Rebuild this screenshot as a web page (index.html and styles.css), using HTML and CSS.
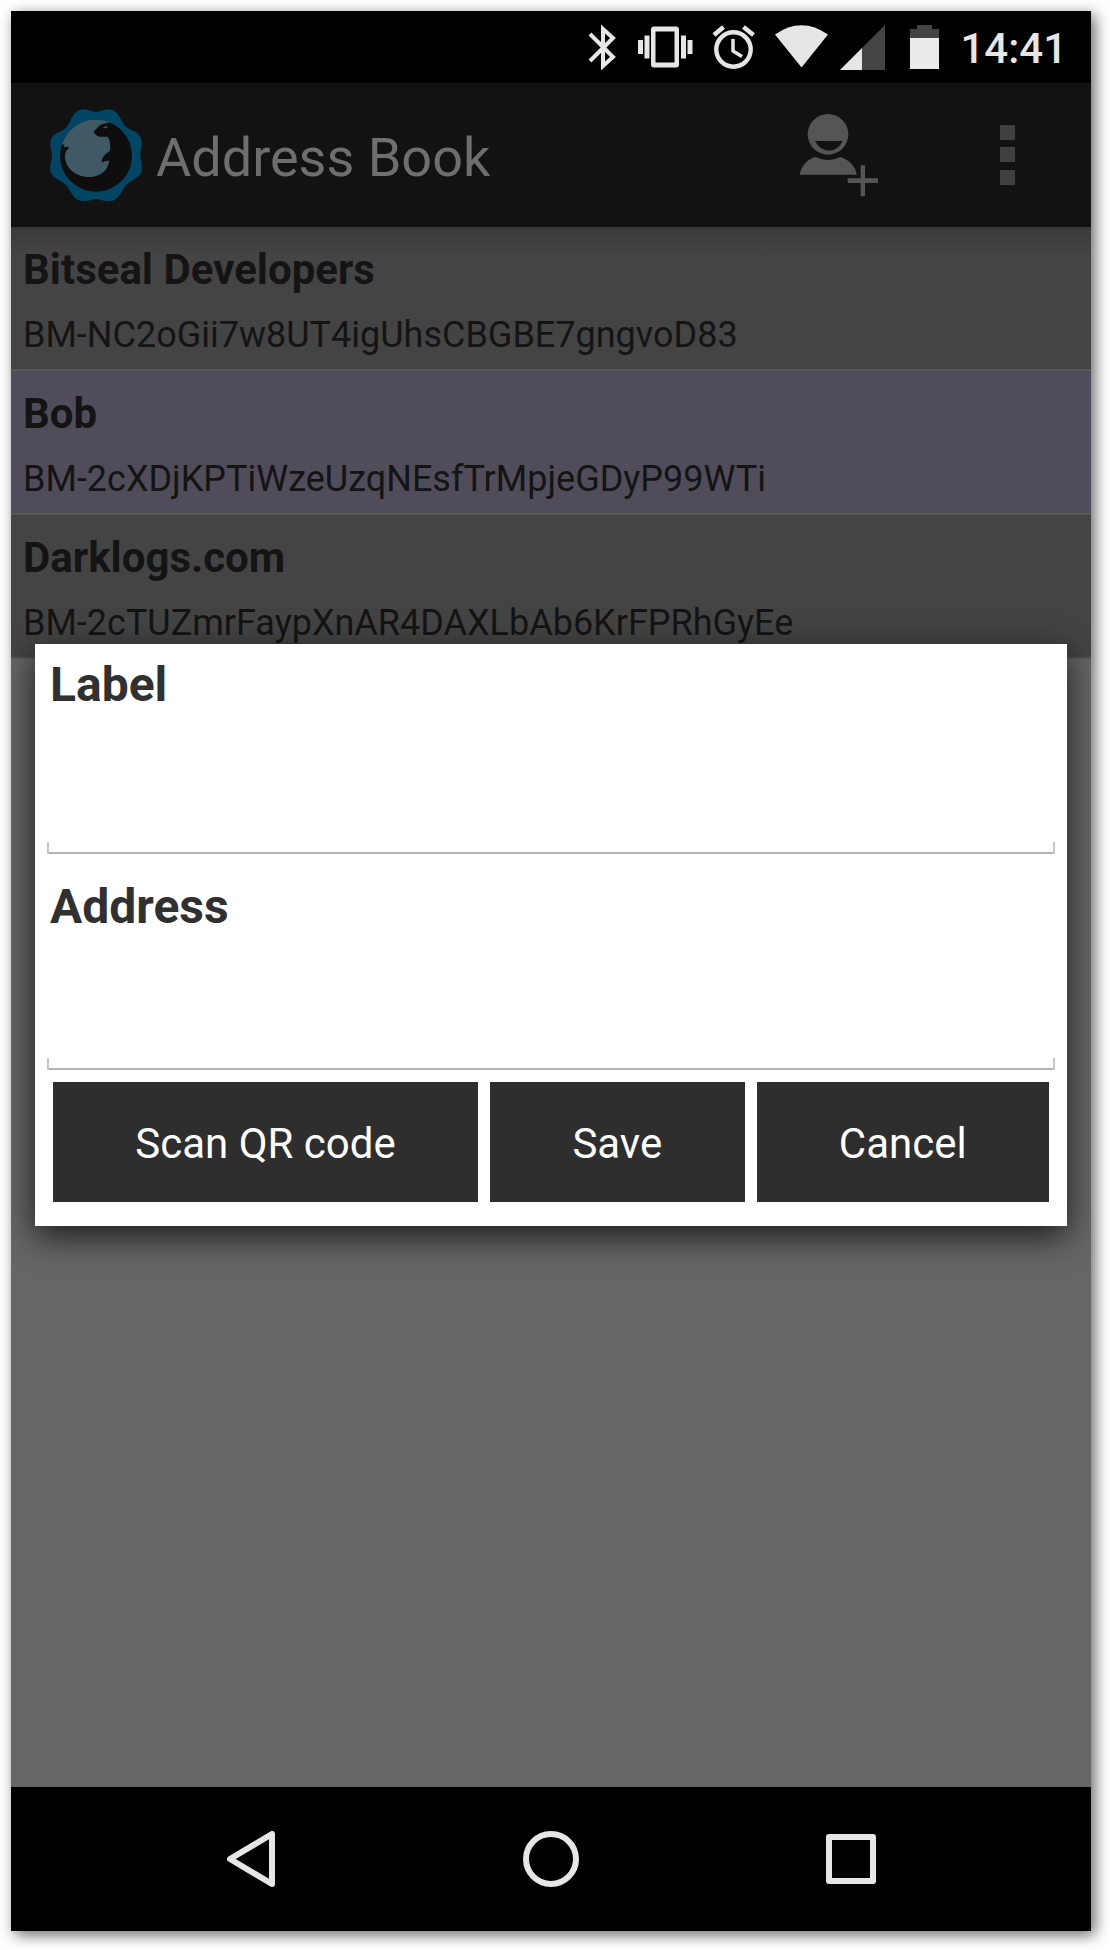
FILE: index.html
```html
<!DOCTYPE html>
<html lang="en">
<head>
<meta charset="utf-8">
<meta name="viewport" content="width=device-width, initial-scale=1">
<title>Address Book</title>
<link rel="stylesheet" href="styles.css">
</head>
<body>
<div class="phone">
  <div class="status-bar">
    <svg width="38" height="48" viewBox="584 23 38 48" aria-hidden="true"><path d="M590 34l23 23-10 9V29l10 9-23 23" fill="none" stroke="#e6e6e6" stroke-width="4"/></svg>
    <svg width="62" height="48" viewBox="634 23 62 48" aria-hidden="true"><path fill="#e6e6e6" fill-rule="evenodd" d="M654 26.500h22a3 3 0 0 1 3 3v35a3 3 0 0 1-3 3h-22a3 3 0 0 1-3-3v-35a3 3 0 0 1 3-3zM655.500 31.500v31h19v-31zM644.500 35.500h5v23h-5zM638 40h5v14h-5zM681 35.500h5v23h-5zM687.500 40h5v14h-5z"/></svg>
    <svg width="50" height="48" viewBox="708 23 50 48" aria-hidden="true"><g fill="none" stroke="#e6e6e6"><circle cx="733.500" cy="49.500" r="17.200" stroke-width="4.400"/><path d="M733 39v12l9 5.500" stroke-width="3.500"/><path d="M714 35l9.500-8M743.500 27l10 8" stroke-width="4.500"/></g></svg>
    <svg width="58" height="48" viewBox="770 23 58 48" aria-hidden="true"><path fill="#e6e6e6" d="M801.500 67.500L775 34.500Q801.500 16 828 34.500z"/></svg>
    <svg width="50" height="48" viewBox="840 23 50 48" aria-hidden="true"><path fill="#444" d="M840 70l45-45v45z"/><path fill="#e6e6e6" d="M840 70l22-22v22z"/></svg>
    <svg width="42" height="48" viewBox="902 23 42 48" aria-hidden="true"><path fill="#444" d="M910 29h7v-4h15v4h7v9h-29z"/><path fill="#ebebeb" d="M910 38h29v31h-29z"/></svg>
    <time class="clock">14:41</time>
  </div>

  <div class="app">
    <header class="app-bar">
      <svg class="logo" width="92" height="93" viewBox="150 85 276 279" aria-hidden="true">
        <path fill="#004563" d="M288 94C300 94 312 84 328 86C350 90 356 104 366 122C374 140 386 144 402 152C420 162 428 175 425 198C422 212 420 216 421 226C422 240 426 244 426 262C425 285 412 290 396 300C380 308 374 318 366 332C354 352 346 362 324 362C308 361 300 356 288 356C276 356 268 361 252 362C228 360 220 348 210 330C202 314 194 308 180 300C160 290 150 280 150 262C150 246 156 240 156 226C156 212 150 205 151 190C152 165 166 160 182 152C198 144 204 136 210 122C222 98 230 88 246 86C262 85 274 94 288 94Z"/>
        <circle cx="288" cy="225" r="108" fill="#0f0d0e"/>
        <path fill="#3f5a64" d="M331 125A108 108 0 0 0 186 190L193 193L192 200L207 198Q206 206 198 212C194 222 194 230 196 238C202 268 232 289 267 289C302 289 324 268 328 240L315 241L306 246C303 236 310 228 316 221C324 214 331 210 331 205C331 190 330 176 322 168L298 168C288 165 280 158 282 150C288 148 292 140 300 134C310 128 320 128 331 125Z"/>
        <path fill="#3f5a64" d="M308 141q8-5 16-3q-5 8-16 3z"/>
      </svg>
      <h1 class="title">Address Book</h1>
      <button class="icon-button" type="button" aria-label="Add contact">
        <svg width="80" height="84" viewBox="118 68 240 252" aria-hidden="true"><g fill="#555"><circle cx="205" cy="132" r="61"/><path d="M120 253C125 225 145 205 168 200Q205 219 242 200C268 208 288 228 291 253zM303 225h13v39h39v14h-39v40h-13v-40h-39v-14h39z"/></g><path fill="#121212" d="M166 152h83q-14 29-41 29t-42-29z"/></svg>
      </button>
      <button class="icon-button menu-button" type="button" aria-label="More options">
        <svg width="16" height="60" viewBox="0 0 16 60" fill="#404040" aria-hidden="true"><path d="M0 0h15v15H0zM0 22h15v15H0zM0 45h15v15H0z"/></svg>
      </button>
    </header>

    <ul class="contacts">
      <li class="contact">
        <h2 class="contact-name">Bitseal Developers</h2>
        <p class="contact-address">BM-NC2oGii7w8UT4igUhsCBGBE7gngvoD83</p>
      </li>
      <li class="contact selected">
        <h2 class="contact-name">Bob</h2>
        <p class="contact-address">BM-2cXDjKPTiWzeUzqNEsfTrMpjeGDyP99WTi</p>
      </li>
      <li class="contact">
        <h2 class="contact-name">Darklogs.com</h2>
        <p class="contact-address">BM-2cTUZmrFaypXnAR4DAXLbAb6KrFPRhGyEe</p>
      </li>
    </ul>

    <div class="overlay">
      <form class="dialog" role="dialog" aria-label="Add contact">
        <div class="field">
          <label for="label">Label</label>
          <input id="label" type="text">
        </div>
        <div class="field">
          <label for="address">Address</label>
          <input id="address" type="text">
        </div>
        <div class="actions">
          <button type="button">Scan QR code</button>
          <button type="button">Save</button>
          <button type="button">Cancel</button>
        </div>
      </form>
    </div>
  </div>

  <nav class="nav-bar">
    <button type="button" aria-label="Back"><svg width="56" height="56" viewBox="0 0 56 56" aria-hidden="true"><path d="M7 28L49 3v50z"/></svg></button>
    <button type="button" aria-label="Home"><svg width="56" height="56" viewBox="0 0 56 56" aria-hidden="true"><circle cx="28" cy="28" r="25"/></svg></button>
    <button type="button" aria-label="Recent apps"><svg width="56" height="56" viewBox="0 0 56 56" aria-hidden="true"><rect x="6" y="6" width="44" height="44"/></svg></button>
  </nav>
</div>
</body>
</html>
```

FILE: styles.css
```css
* {
  box-sizing: border-box;
}

body {
  margin: 0;
  padding: 11px 19px 19px 11px;
  background: #fff;
  font-family: Roboto, "Liberation Sans", sans-serif;
}

h1, h2, p, ul {
  margin: 0;
  padding: 0;
}

button {
  border: 0;
  padding: 0;
  background: none;
  font: inherit;
}

svg {
  display: block;
  flex: none;
}

.phone {
  display: flex;
  flex-direction: column;
  min-height: calc(100vh - 30px);
  background: #000;
  box-shadow: 4px 4px 14px rgba(0, 0, 0, 0.6);
}

.status-bar {
  display: flex;
  align-items: center;
  justify-content: flex-end;
  gap: 12px;
  height: 72px;
  padding-right: 24px;
}

.clock {
  padding: 4px 0 0 4px;
  color: #e6e6e6;
  font-size: 42px;
  font-weight: 500;
  line-height: 48px;
}

.app {
  position: relative;
  flex: 1;
  overflow: hidden;
  background: #666;
}

.app-bar {
  display: flex;
  align-items: center;
  height: 144px;
  padding: 0 75px 0 39px;
  background: #121212;
}

.title {
  flex: 1;
  padding: 6px 0 0 14px;
  color: #6e6e6e;
  font-size: 54px;
  font-weight: 400;
  line-height: 64px;
}

.menu-button {
  margin-left: 121px;
}

.contacts {
  list-style: none;
  background: linear-gradient(#3a3a3a, #444 28px);
}

.contact {
  padding: 18px 12px 13px;
  border-bottom: 2px solid #575757;
  color: #141414;
}

.selected {
  background: #504c5a;
}

.contact-name {
  margin-bottom: 20px;
  font-size: 42px;
  font-weight: 700;
  line-height: 49px;
}

.contact-address {
  font-size: 36px;
  line-height: 42px;
}

.overlay {
  position: absolute;
  inset: 0;
  display: flex;
  align-items: center;
  padding: 0 24px;
}

.dialog {
  flex: 1;
  padding: 12px 12px 24px;
  background: #fff;
  box-shadow: 0 10px 32px rgba(0, 0, 0, 0.75);
}

.field {
  margin-bottom: 12px;
}

.field label {
  display: block;
  padding: 0 3px;
  color: #303030;
  font-size: 48px;
  font-weight: 700;
  line-height: 58px;
}

.field + .field {
  padding-top: 12px;
}

.field input {
  display: block;
  width: 100%;
  height: 140px;
  padding: 0 12px;
  border: 0;
  border-radius: 0;
  background:
    linear-gradient(#c8c8c8, #c8c8c8) left bottom / 2px 12px no-repeat,
    linear-gradient(#c8c8c8, #c8c8c8) right bottom / 2px 12px no-repeat,
    linear-gradient(#b2b2b2, #b2b2b2) left bottom / 100% 2px no-repeat;
  color: #303030;
  font: inherit;
  font-size: 42px;
  outline: 0;
}

.field + .field input {
  height: 134px;
}

.actions {
  display: flex;
  gap: 12px;
  padding: 0 6px;
}

.actions button {
  flex: 1 1 auto;
  height: 120px;
  padding-top: 2px;
  background: #2e2e2e;
  color: #fff;
  font-size: 42px;
}

.nav-bar {
  display: flex;
  height: 144px;
  padding: 0 90px;
}

.nav-bar button {
  display: flex;
  flex: 1;
  align-items: center;
  justify-content: center;
}

.nav-bar svg {
  fill: none;
  stroke: #e6e6e6;
  stroke-width: 6;
  stroke-linejoin: round;
}
```
